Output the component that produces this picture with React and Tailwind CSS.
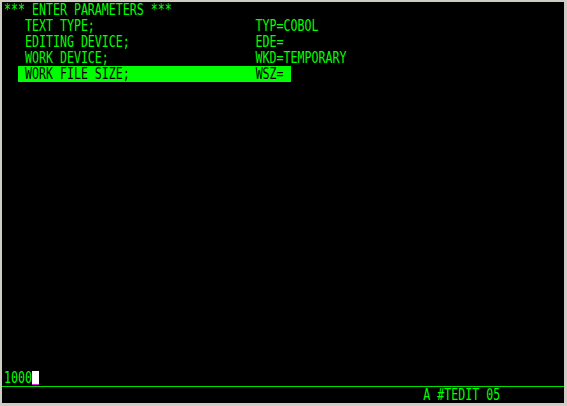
const rows = [
  '*** ENTER PARAMETERS ***',
  '   TEXT TYPE;'.padEnd(36) + 'TYP=COBOL',
  '   EDITING DEVICE;'.padEnd(36) + 'EDE=',
  '   WORK DEVICE;'.padEnd(36) + 'WKD=TEMPORARY',
]

const hilite = (' WORK FILE SIZE;'.padEnd(34) + 'WSZ=').padEnd(39)

// tall, narrow terminal glyphs: 7px pitch, stretched vertically
function T({ children }) {
  return (
    <span className="inline-block h-4 align-top origin-[0_8.77px] scale-y-[1.297]">{children}</span>
  )
}

function Line({ children }) {
  return <div className="h-4 leading-4 whitespace-pre">{children}</div>
}

export default function App() {
  return (
    <div className="w-[567px] h-[406px] bg-[#cfccc4] pt-[2px] pl-[2px] pr-[3px] pb-[3px]">
      <div
        className="h-full bg-black text-[#00ff00] text-[11.628px] flex flex-col"
        style={{ fontFamily: '"DejaVu Sans Mono", "Liberation Mono", monospace' }}
      >
        <div className="flex-1 pl-[2px]">
          {rows.map((r, i) => (
            <Line key={i}><T>{r}</T></Line>
          ))}
          <Line>
            <T>{'  '}</T>
            <span className="inline-block h-4 align-top bg-[#00ff00] text-black">
              <T>{hilite}</T>
            </span>
          </Line>
        </div>

        {/* input line */}
        <div className="pl-[2px]">
          <Line>
            <T>1000</T>
            <span className="inline-block align-top mt-[1px] w-[7px] h-[14px] bg-white border-b border-[#e020e0]" />
          </Line>
        </div>

        <div className="h-px bg-[#00e000]" />

        {/* status line */}
        <div className="pl-[2px]">
          <Line><T>{' '.repeat(60) + 'A #TEDIT 05'}</T></Line>
        </div>
      </div>
    </div>
  )
}
